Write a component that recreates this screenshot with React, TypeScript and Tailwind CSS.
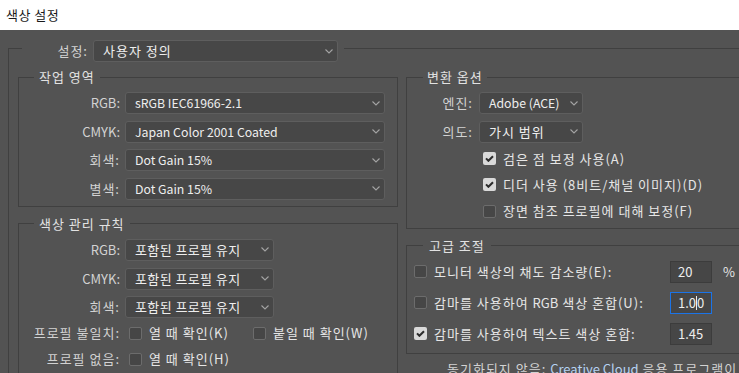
import React from "react";

function Chevron() {
  return (
    <svg width="8" height="5" viewBox="0 0 8 5" className="shrink-0">
      <path d="M0.5 0.5 L4 4 L7.5 0.5" fill="none" stroke="#a4a4a4" strokeWidth="1.1" />
    </svg>
  );
}

function Select({ className, text, latin, tight }: { className: string; text: string; latin?: boolean; tight?: boolean }) {
  return (
    <div
      className={
        "h-[22px] rounded-[3px] border border-[#5e5e5e] bg-[#474747] flex items-center justify-between pl-[9px] pr-[4px] text-[#eeeeee] shrink-0 " +
        className
      }
    >
      <span
        className={
          "whitespace-nowrap " + (latin ? "tracking-normal text-[12.3px]" : tight ? "tracking-[0.4px]" : "")
        }
      >
        {text}
      </span>
      <Chevron />
    </div>
  );
}

function Check({ on }: { on?: boolean }) {
  return on ? (
    <span className="w-[13px] h-[13px] rounded-[2px] bg-[#d9d9d9] flex items-center justify-center shrink-0">
      <svg width="9" height="7" viewBox="0 0 9 7">
        <path d="M1 3.4 L3.4 5.8 L8 1.2" stroke="#2c2c2c" strokeWidth="2" fill="none" />
      </svg>
    </span>
  ) : (
    <span className="w-[13px] h-[13px] rounded-[2px] bg-[#464646] border border-[#6c6c6c] shrink-0" />
  );
}

function Row({ label, latin, children }: { label: string; latin?: boolean; children: React.ReactNode }) {
  return (
    <div className="flex items-center h-[22px]">
      <span className={"w-[101px] text-right text-[#d2d2d2] whitespace-nowrap " + (latin ? "tracking-normal" : "")}>
        {label}
      </span>
      <div className="ml-[5px] flex items-center">{children}</div>
    </div>
  );
}

function CheckItem({ on, text, className }: { on?: boolean; text: React.ReactNode; className?: string }) {
  return (
    <div className={"flex items-center " + (className ?? "")}>
      <Check on={on} />
      <span className="ml-[7px] whitespace-nowrap text-[#e6e6e6]">{text}</span>
    </div>
  );
}

function NumInput({ value, focus }: { value: string; focus?: boolean }) {
  return (
    <div
      className={
        "w-[42px] h-[22px] flex items-center pl-[7px] bg-[#464646] text-[#eeeeee] tracking-normal shrink-0 " +
        (focus ? "border border-[#1b74e8]" : "border border-[#3c3c3c]")
      }
    >
      {focus ? (
        <span className="flex items-center">
          1.0<span className="w-px h-[14px] bg-[#eeeeee]" />0
        </span>
      ) : (
        value
      )}
    </div>
  );
}

export default function App() {
  return (
    <div className="w-[739px] h-[373px] overflow-hidden bg-[#535353] flex flex-col font-['Noto_Sans_CJK_KR','Noto_Sans',sans-serif] text-[13px] leading-[16px] tracking-[1px]">
      <div className="h-[30px] shrink-0 bg-white flex items-center pl-[6px] text-[#1a1a1a] tracking-[0.5px]">색상 설정</div>
      <div className="pl-[8px] pt-[4px]">
        <fieldset className="w-[900px] border border-[#404040] pl-[9px] pb-[20px]">
          <legend className="ml-[4px] pt-[6px] pr-[6px]">
            <div className="flex items-center">
              <span className="w-[66px] text-right text-[#d2d2d2]">설정:</span>
              <Select className="ml-[5px] w-[245px]" text="사용자 정의" />
            </div>
          </legend>
          <div className="flex gap-[8px] pt-[7px]">
            <div className="w-[380px] flex flex-col gap-[9px]">
              <fieldset className="border border-[#404040] pt-[7px] pb-[6px]">
                <legend className="ml-[15px] px-[5px] text-[#e2e2e2]">작업 영역</legend>
                <div className="flex flex-col gap-[6.67px]">
                  <Row label="RGB:" latin>
                    <Select className="w-[260px]" latin text="sRGB IEC61966-2.1" />
                  </Row>
                  <Row label="CMYK:" latin>
                    <Select className="w-[260px]" latin text="Japan Color 2001 Coated" />
                  </Row>
                  <Row label="회색:">
                    <Select className="w-[260px]" latin text="Dot Gain 15%" />
                  </Row>
                  <Row label="별색:">
                    <Select className="w-[260px]" latin text="Dot Gain 15%" />
                  </Row>
                </div>
              </fieldset>
              <fieldset className="border border-[#404040] pt-[7px] pb-[10px]">
                <legend className="ml-[15px] px-[5px] text-[#e2e2e2]">색상 관리 규칙</legend>
                <div className="flex flex-col gap-[6.67px]">
                  <Row label="RGB:" latin>
                    <Select className="w-[149px]" tight text="포함된 프로필 유지" />
                  </Row>
                  <Row label="CMYK:" latin>
                    <Select className="w-[149px]" tight text="포함된 프로필 유지" />
                  </Row>
                  <Row label="회색:">
                    <Select className="w-[149px]" tight text="포함된 프로필 유지" />
                  </Row>
                </div>
                <div className="flex flex-col gap-[4px] mt-[4px]">
                  <Row label="프로필 불일치:">
                    <CheckItem className="ml-[4px] w-[124px]" text="열 때 확인(K)" />
                    <CheckItem text="붙일 때 확인(W)" />
                  </Row>
                  <Row label="프로필 없음:">
                    <CheckItem className="ml-[4px]" text="열 때 확인(H)" />
                  </Row>
                </div>
              </fieldset>
            </div>
            <div className="w-[420px] flex flex-col gap-[9px]">
              <fieldset className="border border-[#404040] pt-[7px] pb-[3px]">
                <legend className="ml-[16px] px-[4px] text-[#e2e2e2]">변환 옵션</legend>
                <div className="flex flex-col gap-[6.67px]">
                  <div className="flex items-center h-[22px]">
                    <span className="w-[66px] text-right text-[#d2d2d2]">엔진:</span>
                    <Select className="ml-[6px] w-[104px]" latin text="Adobe (ACE)" />
                  </div>
                  <div className="flex items-center h-[22px]">
                    <span className="w-[66px] text-right text-[#d2d2d2]">의도:</span>
                    <Select className="ml-[6px] w-[104px]" text="가시 범위" />
                  </div>
                </div>
                <div className="flex flex-col mt-[3px] pl-[76px]">
                  <CheckItem className="h-[26px]" on text="검은 점 보정 사용(A)" />
                  <CheckItem className="h-[26.5px]" on text="디더 사용 (8비트/채널 이미지)(D)" />
                  <CheckItem className="h-[26.5px]" text="장면 참조 프로필에 대해 보정(F)" />
                </div>
              </fieldset>
              <fieldset className="border border-[#404040] pt-[7px] pb-[8px] pl-[7px]">
                <legend className="ml-[9px] px-[6px] text-[#e2e2e2]">고급 조절</legend>
                <div className="flex flex-col gap-[9px]">
                  <div className="flex items-center h-[22px]">
                    <CheckItem className="w-[256px]" text="모니터 색상의 채도 감소량(E):" />
                    <NumInput value="20" />
                    <span className="ml-[11px] text-[#e6e6e6]">%</span>
                  </div>
                  <div className="flex items-center h-[22px]">
                    <CheckItem
                      className="w-[256px]"
                      text={
                        <>
                          감마를 사용하여 <span className="tracking-normal">RGB</span> 색상 혼합(U):
                        </>
                      }
                    />
                    <NumInput value="1.00" focus />
                  </div>
                  <div className="flex items-center h-[22px]">
                    <CheckItem className="w-[256px]" on text="감마를 사용하여 텍스트 색상 혼합:" />
                    <NumInput value="1.45" />
                  </div>
                </div>
              </fieldset>
              <div className="pl-[41px] mt-[-2px] whitespace-nowrap text-[#d2d2d2]">
                동기화되지 않음: <span className="text-[#b5d2f2] tracking-normal">Creative Cloud</span> 응용 프로그램이
              </div>
            </div>
          </div>
        </fieldset>
      </div>
    </div>
  );
}
